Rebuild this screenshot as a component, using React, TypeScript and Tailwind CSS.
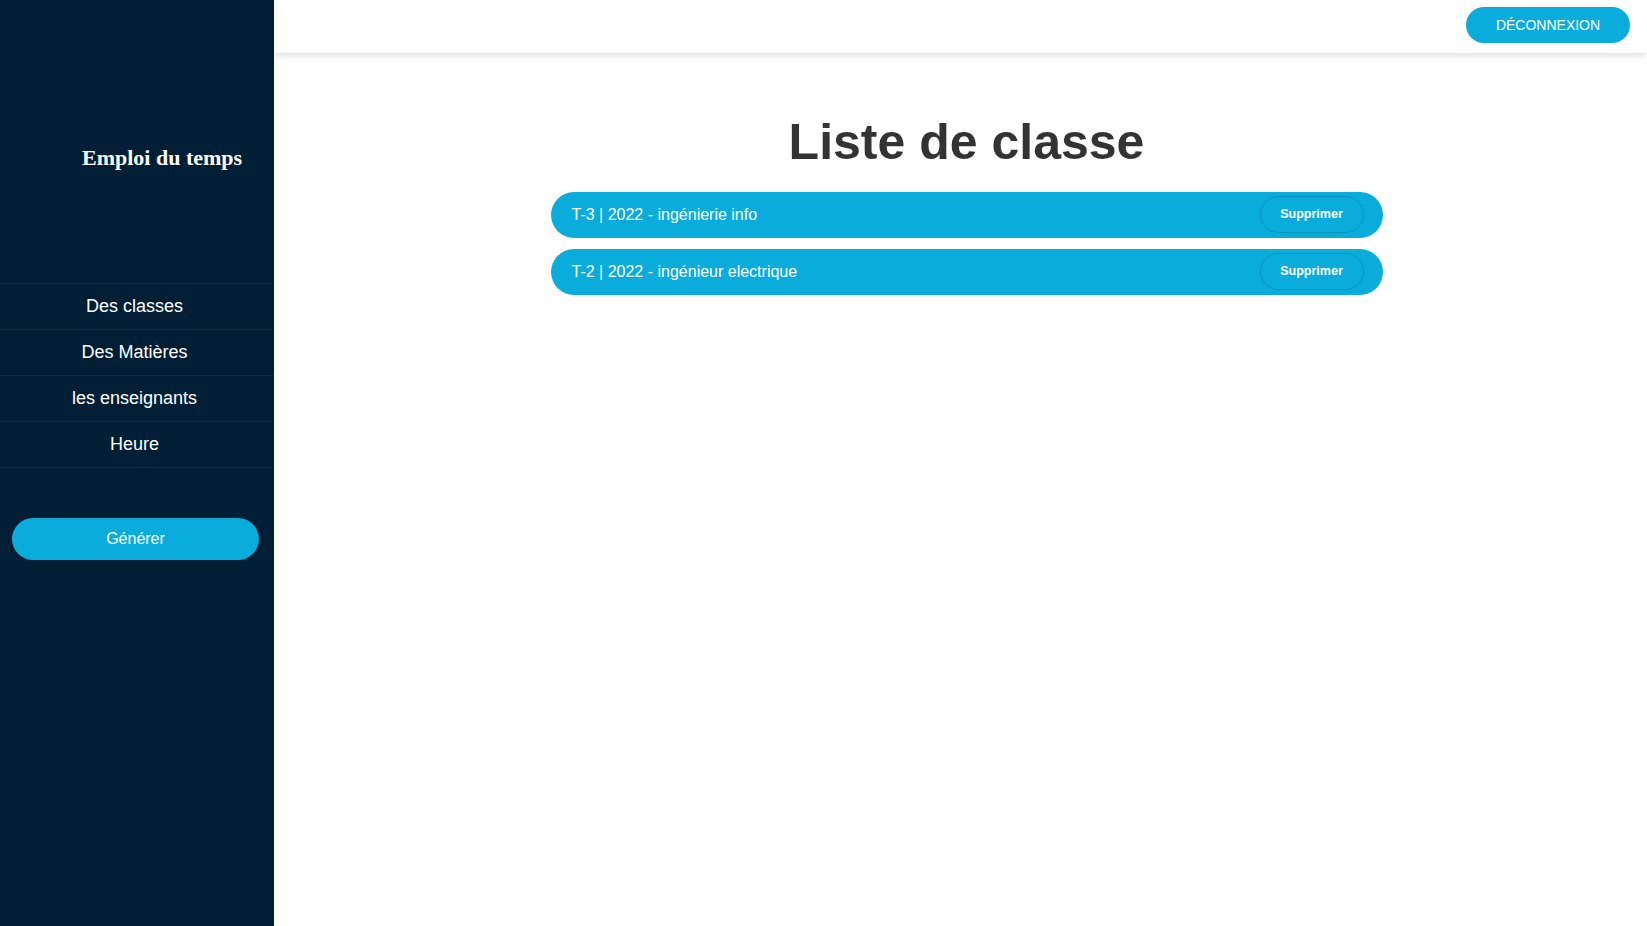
import React from 'react';

const classes = [
  { id: 1, label: 'T-3 | 2022 - ingénierie info' },
  { id: 2, label: 'T-2 | 2022 - ingénieur electrique' },
];

const navItems = ['Des classes', 'Des Matières', 'les enseignants', 'Heure'];

export default function App() {
  return (
    <div className="flex min-h-screen w-full bg-white" style={{ fontFamily: '"Liberation Sans", Arial, sans-serif' }}>
      {/* Sidebar */}
      <aside className="w-[274px] shrink-0 bg-[#001f35] min-h-screen">
        <div className="h-[283px] pt-[145px] pl-[82px]">
          <h2 className="text-white text-[22px] font-bold leading-[1.15]" style={{ fontFamily: '"Liberation Serif", "Times New Roman", serif' }}>
            Emploi du temps
          </h2>
        </div>
        <nav className="border-b border-[#0b2c45]">
          {navItems.map((item) => (
            <div key={item} className="h-[46px] border-t border-[#0b2c45] flex items-center justify-center pr-[5px] text-white text-[18px]">
              {item}
            </div>
          ))}
        </nav>
        <div className="pl-[12px] pr-[15px] pt-[50px]">
          <button className="w-full h-[42px] rounded-full bg-[#0aacdc] text-white text-[16px]">Générer</button>
        </div>
      </aside>

      {/* Main */}
      <div className="flex-1 flex flex-col">
        <header className="h-[53px] bg-white flex items-start justify-end pt-[7px] pr-[17px] shadow-[0_3px_6px_rgba(0,0,0,0.12)] relative z-10">
          <button className="w-[164px] h-[36px] rounded-full bg-[#0aacdc] text-white text-[14px] uppercase">Déconnexion</button>
        </header>
        <main className="flex flex-col items-center pl-[12px]">
          <h1 className="mt-[61px] text-[50px] font-bold text-[#333333] leading-[1.15]">Liste de classe</h1>
          <div className="mt-[20px] w-[832px] flex flex-col gap-[11px]">
            {classes.map((c) => (
              <div key={c.id} className="h-[46px] rounded-full bg-[#0aacdc] flex items-center justify-between pl-[21px] pr-[19px]">
                <span className="text-white text-[16px]">{c.label}</span>
                <button className="w-[104px] h-[37px] rounded-full border border-[#0995c0] text-white text-[12.5px] font-bold">
                  Supprimer
                </button>
              </div>
            ))}
          </div>
        </main>
      </div>
    </div>
  );
}
